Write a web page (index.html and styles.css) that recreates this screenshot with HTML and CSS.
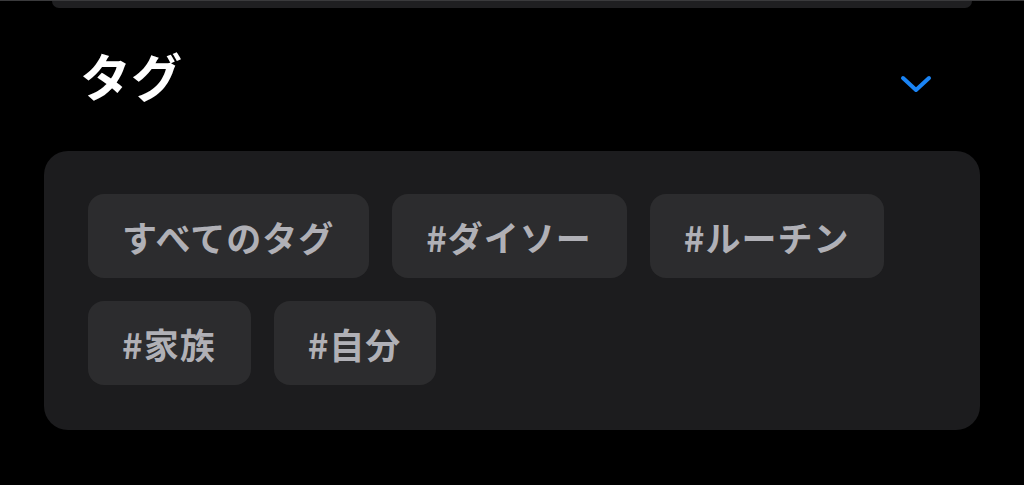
FILE: index.html
```html
<!DOCTYPE html>
<html lang="ja">
<head>
<meta charset="utf-8">
<title>タグ</title>
<link rel="stylesheet" href="styles.css">
</head>
<body>
<div class="top-line"></div>
<div class="top-card"></div>
<div class="header">
  <h1 class="title">タグ</h1>
  <svg class="chevron" width="32" height="18" viewBox="0 0 32 18" aria-hidden="true">
    <path d="M3 3 L16 15 L29 3" fill="none" stroke="#1a84f5" stroke-width="4" stroke-linecap="round" stroke-linejoin="round"/>
  </svg>
</div>
<div class="panel">
  <div class="chip">すべてのタグ</div>
  <div class="chip">#ダイソー</div>
  <div class="chip">#ルーチン</div>
  <div class="chip">#家族</div>
  <div class="chip">#自分</div>
</div>
</body>
</html>
```
FILE: styles.css
```css
html, body {
  margin: 0;
  padding: 0;
  background: #000;
  width: 1024px;
  height: 485px;
  overflow: hidden;
  font-family: "Noto Sans CJK JP", "Noto Sans", sans-serif;
}
.top-line {
  height: 1px;
  background: #3a3a3c;
}
.top-card {
  margin: 0 52px;
  height: 7px;
  background: #1f1f21;
  border-radius: 0 0 14px 14px;
}
.header {
  display: flex;
  justify-content: space-between;
  align-items: flex-start;
  box-sizing: border-box;
  height: 143px;
  padding: 40px 92px 0 80px;
}
.title {
  margin: 0;
  color: #fff;
  font-size: 51px;
  font-weight: 700;
  line-height: 54px;
}
.chevron {
  margin-top: 27px;
  display: block;
}
.panel {
  margin: 0 44px;
  box-sizing: border-box;
  width: 936px;
  padding: 43px 44px 45px;
  background: #1c1c1e;
  border-radius: 24px;
  display: flex;
  flex-wrap: wrap;
  gap: 23px;
}
.chip {
  height: 84px;
  box-sizing: border-box;
  padding: 0 35px 0 34px;
  display: flex;
  align-items: center;
  background: #2c2c2e;
  border-radius: 16px;
  color: #b0b0b6;
  font-size: 35px;
  font-weight: 600;
  letter-spacing: 1px;
  line-height: 1;
}
```
